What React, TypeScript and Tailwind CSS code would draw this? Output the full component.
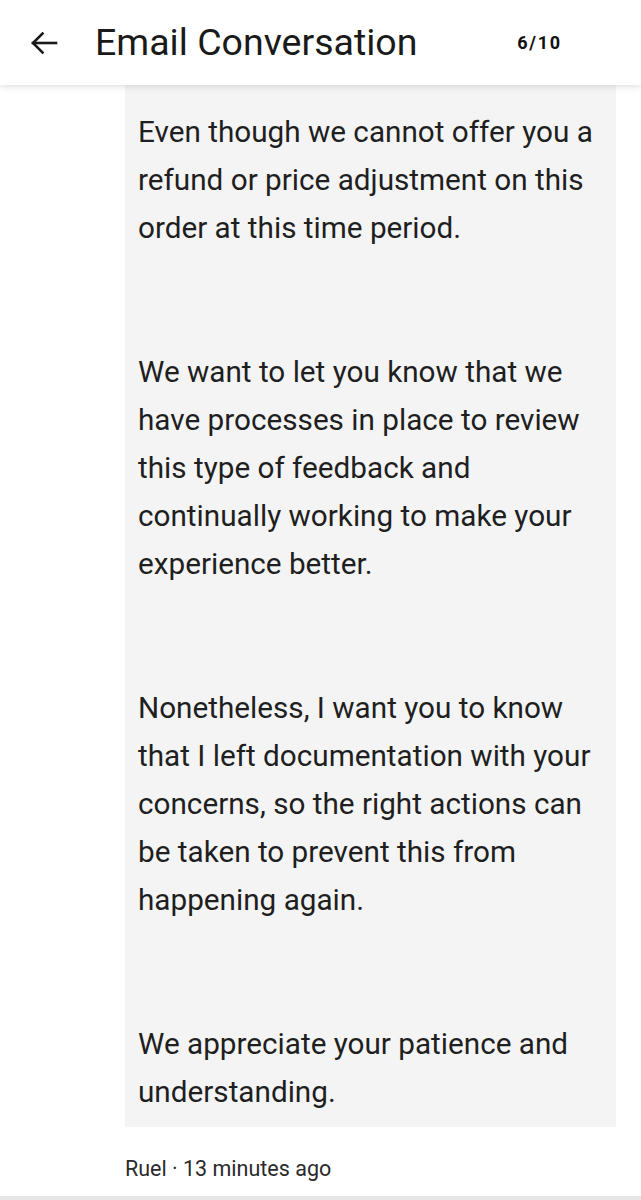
import React from 'react'

const paragraphs = [
  ['Even though we cannot offer you a', 'refund or price adjustment on this', 'order at this time period.'],
  [
    'We want to let you know that we',
    'have processes in place to review',
    'this type of feedback and',
    'continually working to make your',
    'experience better.',
  ],
  [
    'Nonetheless, I want you to know',
    'that I left documentation with your',
    'concerns, so the right actions can',
    'be taken to prevent this from',
    'happening again.',
  ],
  ['We appreciate your patience and', 'understanding.'],
]

function BackArrow() {
  return (
    <svg width="28" height="24" viewBox="0 0 28 24" fill="none" stroke="#1a1a1a" strokeWidth="2.6" strokeLinecap="square">
      <path d="M3 12h23" />
      <path d="M12.5 2.5L3 12l9.5 9.5" />
    </svg>
  )
}

export default function App() {
  return (
    <div className="flex h-[1200px] w-[641px] flex-col overflow-hidden bg-white text-[#1f1f1f] font-['Roboto',sans-serif]">
      {/* header */}
      <div className="relative z-10 flex h-[85px] shrink-0 items-center bg-white shadow-[0_2px_6px_rgba(0,0,0,0.12)]">
        <div className="ml-[30px] flex w-[28px] items-center">
          <BackArrow />
        </div>
        <div className="ml-[37px] text-[37.5px] leading-none text-[#1a1a1a]">Email Conversation</div>
        <div className="ml-auto mr-[79px] text-[18px] font-bold tracking-[1.8px] text-[#111]">6/10</div>
      </div>

      {/* message */}
      <div className="flex-1">
        <div className="ml-[125px] w-[491px] bg-[#f4f4f4] pl-[13px] pr-[6px] pt-[23px] pb-[11px]">
          {paragraphs.map((lines, i) => (
            <p key={i} className={`text-[29.7px] leading-[48px] ${i > 0 ? 'mt-[96px]' : ''}`}>
              {lines.map((l, j) => (
                <span key={j} className="block whitespace-nowrap">
                  {l}
                </span>
              ))}
            </p>
          ))}
        </div>
        <div className="ml-[125px] mt-[28px] text-[21.5px] leading-[28px] text-[#2a2a2a]">Ruel · 13 minutes ago</div>
      </div>

      <div className="h-[4px] shrink-0 bg-[#e6e6e6]" />
    </div>
  )
}
